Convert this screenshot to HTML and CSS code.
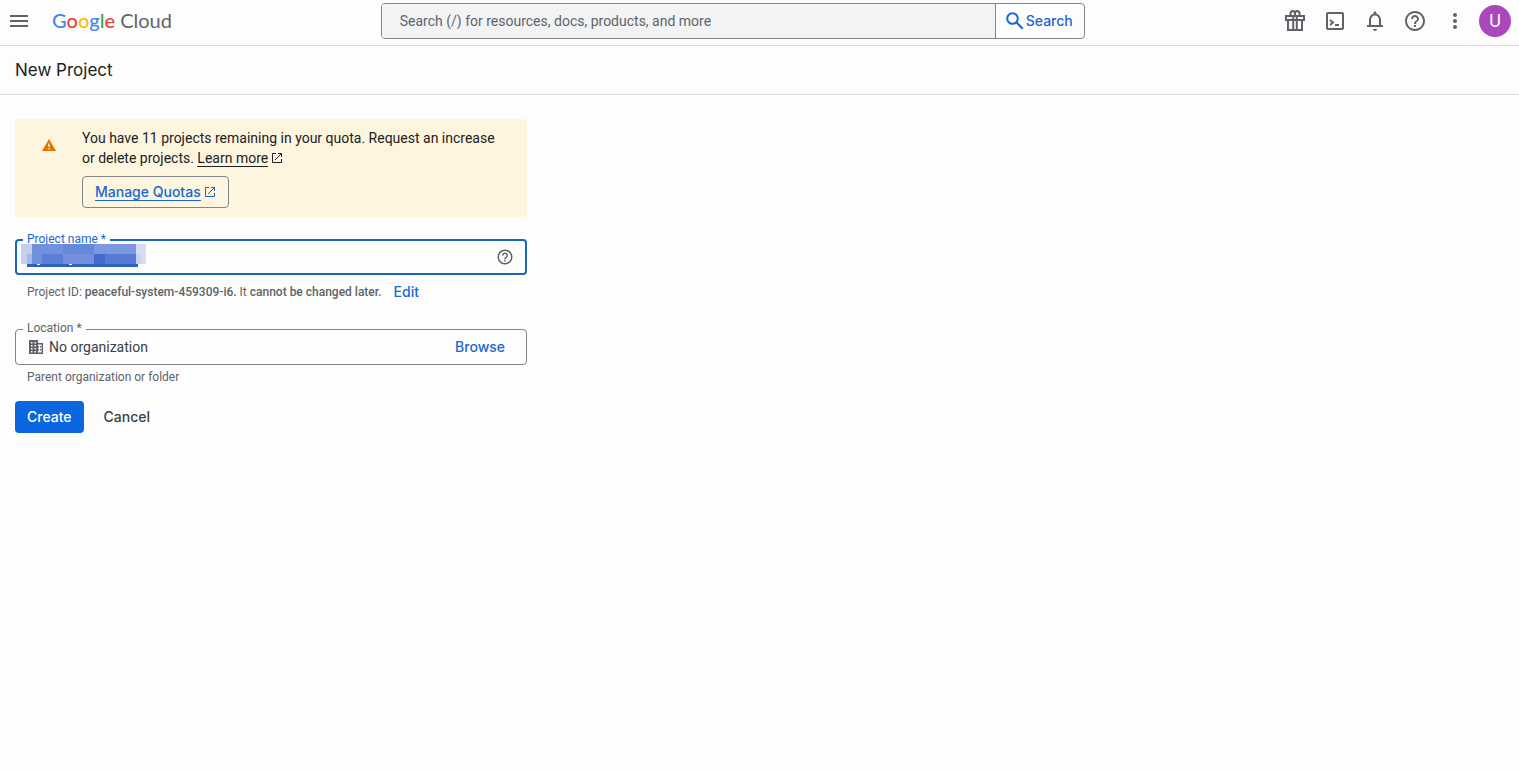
FILE: index.html
```
<!DOCTYPE html>
<html lang="en">
	<head>
		<meta charset="utf-8">
		<title>New Project – Google Cloud</title>
		<link rel="stylesheet" href="styles.css">
	</head>
	<body>
		<header class="topbar">
			<div class="brand">
				<button type="button" class="icon-btn menu-btn" aria-label="Navigation menu">
					<svg class="icon" viewBox="0 0 24 24"><path d="M3 6h18v2H3zM3 11h18v2H3zM3 16h18v2H3z"/></svg>
				</button>
				<a href="#" class="logo"><span class="google"><span class="blue">G</span><span class="red">o</span><span class="yellow">o</span><span class="blue">g</span><span class="green">l</span><span class="red">e</span></span> Cloud</a>
			</div>
			<form class="search" role="search">
				<input type="text" class="search-input" aria-label="Search" placeholder="Search (/) for resources, docs, products, and more">
				<button type="button" class="search-btn">
					<svg class="search-icon" viewBox="0 0 18 18"><circle cx="6.5" cy="6.5" r="5.3"/><path d="M10.3 10.3l6.4 6.4"/></svg>
					Search
				</button>
			</form>
			<div class="actions">
				<button type="button" class="icon-btn" aria-label="Free trial">
					<svg class="icon line" viewBox="0 0 24 24"><path d="M3 7h18v4H3zM5 11h14v10H5zM10.200 7v14M13.800 7v14"/><path d="M12 6V4.500C12 1 7.500 1 7.500 4.500V7M12 6V4.500C12 1 16.500 1 16.500 4.500V7"/></svg>
				</button>
				<button type="button" class="icon-btn" aria-label="Activate Cloud Shell">
					<svg class="icon line" viewBox="0 0 24 24"><rect x="4" y="4" width="16" height="16" rx="1"/><path d="M7 11l3 2.500-3 2.500M12 16h4"/></svg>
				</button>
				<button type="button" class="icon-btn" aria-label="Notifications">
					<svg class="icon" viewBox="0 0 24 24"><path d="M12 22c1.100 0 2-.9 2-2h-4c0 1.100.9 2 2 2zm6-6v-5c0-3.070-1.630-5.640-4.500-6.320V4c0-.83-.67-1.500-1.500-1.500s-1.500.67-1.500 1.500v.68C7.640 5.360 6 7.920 6 11v5H4v2h16v-2h-2zm-2 0H8v-5c0-2.480 1.510-4.500 4-4.500s4 2.020 4 4.500v5z"/></svg>
				</button>
				<button type="button" class="icon-btn" aria-label="Help">
					<svg class="icon" viewBox="0 0 24 24"><path d="M11 18h2v-2h-2v2zm1-16C6.480 2 2 6.480 2 12s4.480 10 10 10 10-4.480 10-10S17.520 2 12 2zm0 18c-4.410 0-8-3.590-8-8s3.590-8 8-8 8 3.590 8 8-3.590 8-8 8zm0-14c-2.210 0-4 1.790-4 4h2c0-1.100.9-2 2-2s2 .9 2 2c0 2-3 1.750-3 5h2c0-2.250 3-2.500 3-5 0-2.210-1.790-4-4-4z"/></svg>
				</button>
				<button type="button" class="icon-btn" aria-label="Settings and utilities">
					<svg class="icon" viewBox="0 0 24 24"><circle cx="12" cy="6" r="2"/><circle cx="12" cy="12" r="2"/><circle cx="12" cy="18" r="2"/></svg>
				</button>
				<button type="button" class="icon-btn" aria-label="Account"><span class="avatar">U</span></button>
			</div>
		</header>

		<div class="page-title">
			<h1>New Project</h1>
		</div>

		<main class="content">
			<section class="notice">
				<svg class="warn" viewBox="0 0 14 12"><path d="M7 0l7 12H0z"/><path class="mark" d="M6.300 4.500h1.400v3.500H6.300zM6.300 9h1.400v1.400H6.300z"/></svg>
				<div class="notice-body">
					<p>You have 11 projects remaining in your quota. Request an increase or delete projects. <a href="#" class="learn"><span>Learn more</span><svg class="ext" viewBox="0 0 12 12"><path d="M5 1.500H1.500v9h9V7M7 1.500h3.500V5M10.500 1.500L4 8"/></svg></a></p>
					<a href="#" class="quota-btn"><span>Manage Quotas</span><svg class="ext" viewBox="0 0 12 12"><path d="M5 1.500H1.500v9h9V7M7 1.500h3.500V5M10.500 1.500L4 8"/></svg></a>
				</div>
			</section>

			<form>
				<fieldset class="field focused">
					<legend><label for="name">Project name *</label></legend>
					<div class="field-row">
						<input type="text" id="name">
						<svg class="help" viewBox="0 0 24 24"><path d="M11 18h2v-2h-2v2zm1-16C6.480 2 2 6.480 2 12s4.480 10 10 10 10-4.480 10-10S17.520 2 12 2zm0 18c-4.410 0-8-3.590-8-8s3.590-8 8-8 8 3.590 8 8-3.590 8-8 8zm0-14c-2.210 0-4 1.790-4 4h2c0-1.100.9-2 2-2s2 .9 2 2c0 2-3 1.750-3 5h2c0-2.250 3-2.500 3-5 0-2.210-1.790-4-4-4z"/></svg>
					</div>
					<!-- masked value -->
					<svg class="mask" viewBox="0 0 125 23" shape-rendering="crispEdges">
						<path fill="#2f62bf" d="M6 20h111v3H6z"/>
						<path fill="#fff" d="M16 20h3v1h-3zM48 20h3v1h-3z"/>
						<path fill="#c5cfec" d="M0 0h11v20H0z"/>
						<path fill="#a9b8e6" d="M6 10h5v10H6z"/>
						<path fill="#7391db" d="M11 0h31v10H11z"/>
						<path fill="#6688d8" d="M42 0h31v10H42z"/>
						<path fill="#7c99df" d="M73 0h42v10H73z"/>
						<path fill="#708fdc" d="M11 10h10v10H11z"/>
						<path fill="#5b7fd6" d="M21 10h21v10H21z"/>
						<path fill="#7490dc" d="M42 10h31v10H42z"/>
						<path fill="#426cd0" d="M73 10h11v10H73z"/>
						<path fill="#587cd6" d="M84 10h31v10H84z"/>
						<path fill="#d5dcf3" d="M115 0h10v20h-10z"/>
						<path fill="#c7d1f0" d="M115 10h5v10h-5z"/>
					</svg>
				</fieldset>
				<div class="hint id-hint">
					<span>Project ID: <b>peaceful-system-459309-i6.</b> It <b>cannot be changed later.</b></span>
					<button type="button" class="text-btn">Edit</button>
				</div>

				<fieldset class="field">
					<legend><label for="location">Location *</label></legend>
					<div class="field-row">
						<svg class="org" viewBox="0 0 14 14"><path d="M0 0h9v3h5v11H0zM2 2v1.500h1.500V2zM5.500 2v1.500H7V2zM2 5v1.500h1.500V5zM5.500 5v1.500H7V5zM2 8v1.500h1.500V8zM5.500 8v1.500H7V8zM2 11v1.500h1.500V11zM5.500 11v1.500H7V11zM9 4.500V6h1v1.500H9V9h1v1.500H9v2h3.500v-8zM11 6h1v1.500h-1zM11 9h1v1.500h-1z" fill-rule="evenodd"/></svg>
						<input type="text" id="location" value="No organization" readonly>
						<button type="button" class="text-btn">Browse</button>
					</div>
				</fieldset>
				<div class="hint">Parent organization or folder</div>

				<div class="buttons">
					<button type="button" class="btn primary">Create</button>
					<button type="button" class="btn">Cancel</button>
				</div>
			</form>
		</main>
	</body>
</html>
```
FILE: styles.css
```
*{
	box-sizing: border-box;
}
body{
	margin: 0;
	background-color: #fdfdfd;
	color: #202124;
	font-family: Roboto, "Liberation Sans", sans-serif;
	font-size: 14px;
	line-height: 20px;
}
button,input{
	font: inherit;
	color: inherit;
	border: 0;
	padding: 0;
	background: none;
}
button{
	cursor: pointer;
}
p,h1{
	margin: 0;
}

/* top bar */
.topbar{
	display: flex;
	align-items: center;
	padding: 3px 4px 6px 0;
	border-bottom: 1px solid #dadce0;
}
.brand{
	flex: 0 0 25%;
	display: flex;
	align-items: center;
	padding-left: 1px;
}
.logo{
	margin-left: 15px;
	padding-bottom: 2px;
	color: #5f6368;
	font-family: Lato, sans-serif;
	font-size: 20px;
	text-decoration: none;
}
.google{
	font-weight: 500;
}
.blue{
	color: #4285f4;
}
.red{
	color: #ea4335;
}
.yellow{
	color: #fbbc04;
}
.green{
	color: #34a853;
}
.search{
	flex: 0 1 704px;
	display: flex;
	margin-left: 2px;
	height: 36px;
	border: 1px solid #80868b;
	border-radius: 4px;
	overflow: hidden;
}
.search-input{
	flex: 1;
	min-width: 0;
	padding: 0 18px;
	background-color: #f1f3f4;
}
.search-input::placeholder{
	color: #5f6368;
	opacity: 1;
}
.search-btn{
	display: flex;
	align-items: center;
	gap: 2px;
	padding: 0 11px 0 10px;
	border-left: 1px solid #80868b;
	color: #1967d2;
	font-family: Inter, sans-serif;
	font-weight: 500;
}
.search-icon{
	width: 18px;
	height: 18px;
	fill: none;
	stroke: #1967d2;
	stroke-width: 2;
}
.actions{
	display: flex;
	margin-left: auto;
}
.icon-btn{
	width: 40px;
	height: 36px;
	display: flex;
	align-items: center;
	justify-content: center;
}
.menu-btn{
	width: 36px;
}
.icon{
	width: 24px;
	height: 24px;
	fill: #5f6368;
}
.line{
	fill: none;
	stroke: #5f6368;
	stroke-width: 2;
}
.avatar{
	width: 32px;
	height: 32px;
	border-radius: 50%;
	background-color: #ab47bc;
	color: #fff;
	font-size: 18px;
	line-height: 32px;
}

/* title row */
.page-title{
	padding: 12px 15px;
	border-bottom: 1px solid #dadce0;
}
.page-title h1{
	font-family: Inter, sans-serif;
	font-size: 17px;
	font-weight: 400;
	line-height: 24px;
}

/* form column */
.content{
	max-width: 542px;
	padding: 24px 15px;
}
.notice{
	display: flex;
	padding: 9px 24px 9px 27px;
	border-radius: 4px;
	background-color: #fef5de;
}
.warn{
	flex: none;
	width: 14px;
	height: 12px;
	margin: 11px 26px 0 0;
	fill: #e37400;
}
.warn .mark{
	fill: #fef5de;
}
.ext{
	width: 12px;
	height: 12px;
	margin-left: 3px;
	fill: none;
	stroke: currentColor;
	vertical-align: -1px;
}
.learn{
	color: inherit;
	text-decoration: none;
}
.learn span,.quota-btn span{
	border-bottom: 1px solid;
}
.quota-btn{
	display: inline-block;
	margin-top: 8px;
	padding: 5px 12px;
	border: 1px solid #80868b;
	border-radius: 4px;
	color: #1967d2;
	font-family: Inter, sans-serif;
	font-weight: 500;
	text-decoration: none;
}
.field{
	position: relative;
	margin: 14px 0 0;
	padding: 0 7px;
	border: 1px solid #80868b;
	border-radius: 4px;
}
.field legend{
	padding: 0 4px 2px;
	color: #5f6368;
	font-size: 12px;
	line-height: 16px;
}
.field.focused{
	padding: 0 6px;
	border: 2px solid #1a66bf;
}
.focused legend{
	color: #1967d2;
}
.field-row{
	display: flex;
	align-items: center;
	height: 26px;
	padding: 0 14px 8px 4px;
}
.focused .field-row{
	height: 24px;
	padding-right: 5px;
}
.field-row input{
	flex: 1;
	min-width: 0;
	outline: 0;
	color: #3c4043;
}
.help{
	width: 18px;
	height: 18px;
	fill: #5f6368;
}
.org{
	width: 14px;
	height: 14px;
	margin: 0 6px 0 2px;
	fill: #5f6368;
}
.mask{
	position: absolute;
	top: -5px;
	left: 4px;
	width: 125px;
	height: 23px;
}
.hint{
	padding: 4px 12px 0;
	color: #5f6368;
	font-size: 12px;
	line-height: 16px;
}
.id-hint{
	display: flex;
	gap: 12px;
	padding: 9px 12px 6px;
}
.hint b{
	font-weight: 500;
}
.text-btn{
	color: #1967d2;
	font-family: Inter, sans-serif;
	font-size: 14px;
	font-weight: 500;
}
.buttons{
	display: flex;
	gap: 8px;
	margin-top: 16px;
}
.btn{
	height: 32px;
	padding: 0 12px;
	border-radius: 4px;
	color: #3c4043;
	font-family: Inter, sans-serif;
	font-weight: 500;
}
.primary{
	background-color: #0b66e0;
	color: #fff;
}
```
